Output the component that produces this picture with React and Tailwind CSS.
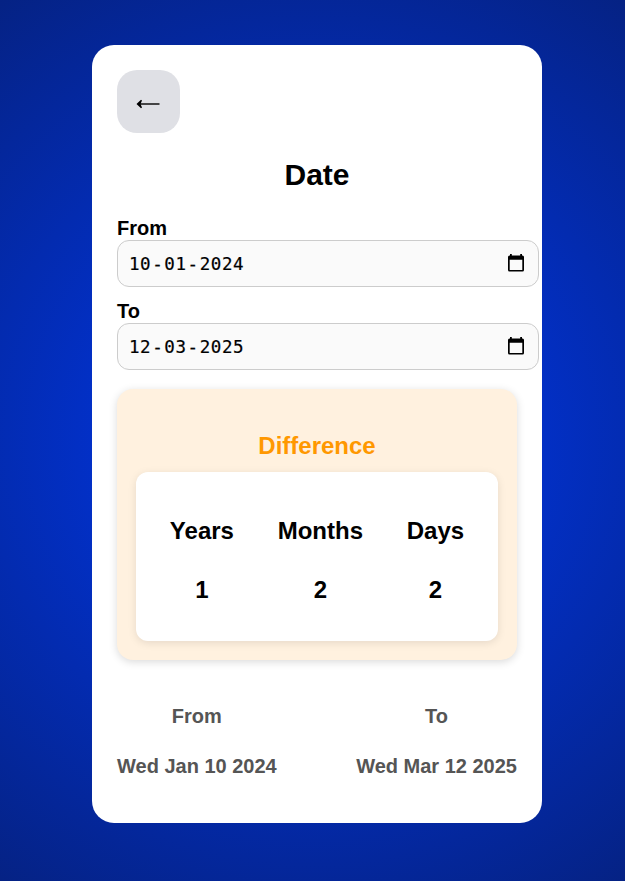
function CalendarIcon() {
  return (
    <svg width="18" height="20" viewBox="0 0 18 20" className="mb-px block">
      <path
        fill="#000"
        fillRule="evenodd"
        d="M3 1h1.800v1.500h8.400V1H15v1.500h.5A1.500 1.500 0 0 1 17 4v13a1.500 1.500 0 0 1-1.500 1.500h-13A1.500 1.500 0 0 1 1 17V4a1.500 1.500 0 0 1 1.500-1.500H3zM2.700 6.800V17h12.600V6.800z"
      />
    </svg>
  );
}

function DateField({ label, day, month, year }) {
  return (
    <div>
      <div className="h-[23px] text-xl leading-[23px] font-bold">{label}</div>
      <div className="flex h-[47px] w-[422px] items-center justify-between rounded-xl border border-[#ccc] bg-[#fafafa] pr-[13px] pl-[11px]">
        <div className="flex gap-px font-['DejaVu_Sans_Mono',monospace] text-[17.5px] leading-6 tracking-[0.58px] [-webkit-text-stroke:0.2px_black]">
          <span>{day}</span>
          <span>-</span>
          <span>{month}</span>
          <span>-</span>
          <span>{year}</span>
        </div>
        <CalendarIcon />
      </div>
    </div>
  );
}

function Unit({ name, value }) {
  return (
    <div className="text-center text-2xl leading-[27px] font-bold">
      <div>{name}</div>
      <div className="mt-8">{value}</div>
    </div>
  );
}

function Endpoint({ name, date }) {
  return (
    <div className="text-center text-xl leading-[23px] font-bold text-[#555]">
      <div>{name}</div>
      <div className="mt-[27px]">{date}</div>
    </div>
  );
}

export default function App() {
  return (
    <div className="h-[881px] w-[625px] overflow-hidden bg-[radial-gradient(circle,#0039f4_0%,#052284_100%)] pt-[45px] pl-[92px] font-['Liberation_Sans',Arial,sans-serif] text-black">
      <div className="h-[778px] w-[450px] rounded-[22px] bg-white p-[25px]">
        <button className="flex size-[63px] items-center justify-center rounded-[20px] bg-[#dfe0e5]">
          <svg width="24" height="10" viewBox="0 0 24 10" className="mt-[5px] mr-[2px]">
            <path d="M4 5H23.500" stroke="#333" strokeWidth="1.800" />
            <path d="M0.500 5L5 0.800L6 1.500L4.500 5L6 8.500L5 9.200Z" fill="#000" />
          </svg>
        </button>
        <h1 className="mt-[25px] h-[34px] text-center text-[30px] leading-[34px] font-bold">Date</h1>
        <div className="mt-[25px] flex flex-col gap-[13px]">
          <DateField label="From" day="10" month="01" year="2024" />
          <DateField label="To" day="12" month="03" year="2025" />
        </div>
        <section className="mt-[19px] h-[271px] rounded-2xl bg-[#fff1df] px-[19px] pt-[43px] shadow-[0_2px_8px_rgba(0,0,0,0.15)]">
          <h2 className="text-center text-2xl leading-[27px] font-bold text-[#ff9800]">Difference</h2>
          <div className="mt-[13px] flex h-[169px] justify-around rounded-xl bg-white px-3 pt-[45px] shadow-[0_2px_8px_rgba(0,0,0,0.1)]">
            <Unit name="Years" value="1" />
            <Unit name="Months" value="2" />
            <Unit name="Days" value="2" />
          </div>
        </section>
        <div className="mt-[45px] flex justify-between">
          <Endpoint name="From" date="Wed Jan 10 2024" />
          <Endpoint name="To" date="Wed Mar 12 2025" />
        </div>
      </div>
    </div>
  );
}
